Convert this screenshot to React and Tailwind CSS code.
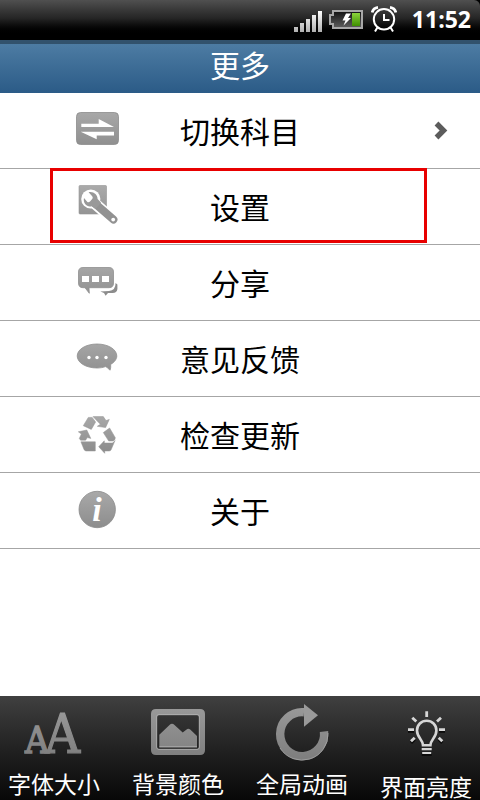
import { useState } from 'react'

const rows = [
  { id: 'subject', label: '切换科目', Icon: SwitchIcon, hasMore: true },
  { id: 'settings', label: '设置', Icon: WrenchIcon },
  { id: 'share', label: '分享', Icon: ShareIcon },
  { id: 'feedback', label: '意见反馈', Icon: FeedbackIcon },
  { id: 'update', label: '检查更新', Icon: RecycleIcon },
  { id: 'about', label: '关于', Icon: InfoIcon },
]

const tools = [
  { id: 'font', label: '字体大小', Icon: FontSizeIcon },
  { id: 'background', label: '背景颜色', Icon: PictureIcon },
  { id: 'animation', label: '全局动画', Icon: RotateIcon },
  { id: 'brightness', label: '界面亮度', Icon: BulbIcon },
]

/* Gradients shared by all icons */
function Gradients() {
  return (
    <svg className="absolute w-0 h-0" aria-hidden="true">
      <defs>
        <linearGradient id="grey" gradientUnits="userSpaceOnUse" x1="0" y1="2" x2="0" y2="40">
          <stop offset="0" stopColor="#a9a9a9" />
          <stop offset="1" stopColor="#8c8c8c" />
        </linearGradient>
        <linearGradient id="tool" gradientUnits="userSpaceOnUse" x1="0" y1="4" x2="0" y2="56">
          <stop offset="0" stopColor="#9a9a9a" />
          <stop offset="1" stopColor="#7e7e7e" />
        </linearGradient>
        <linearGradient id="bars" gradientUnits="userSpaceOnUse" x1="0" y1="5" x2="0" y2="26">
          <stop offset="0" stopColor="#ffffff" />
          <stop offset="1" stopColor="#b0b0b0" />
        </linearGradient>
        <linearGradient id="cell" x1="0" y1="0" x2="0" y2="1">
          <stop offset="0" stopColor="#111111" />
          <stop offset="1" stopColor="#606060" />
        </linearGradient>
        <linearGradient id="charge" x1="0" y1="0" x2="0" y2="1">
          <stop offset="0" stopColor="#8bd43c" />
          <stop offset="1" stopColor="#3f8f00" />
        </linearGradient>
      </defs>
    </svg>
  )
}

function RowSvg({ children }) {
  return (
    <svg viewBox="0 0 44 43" className="w-[44px] h-[43px]" fill="url(#grey)" aria-hidden="true">
      {children}
    </svg>
  )
}

function SwitchIcon() {
  return (
    <RowSvg>
      <rect x="1.5" y="3.5" width="42" height="32" rx="4" stroke="#8c8c8c" strokeWidth="0.8" />
      <path fill="#fff" d="M6.3 14.7H23.7V10L39 18H6.3ZM39 22.7V26.5H21.7V30.3L5.7 22.7Z" />
    </RowSvg>
  )
}

function WrenchIcon() {
  return (
    <RowSvg>
      <rect x="4" y="0.5" width="27.5" height="28.5" rx="1" stroke="#949494" strokeWidth="0.6" />
      <circle cx="15.8" cy="14" r="9.6" fill="#fff" />
      <path d="M17 16L38.6 35" stroke="#fff" strokeWidth="11.5" strokeLinecap="round" />
      <path d="M20 18.5L38.4 34.6" stroke="#929292" strokeWidth="8" strokeLinecap="round" />
      <path
        d="M13.6 7.2C18 6 22.6 9.2 22.6 14L26 17.6L20.6 24L16.6 21.2C12 22.4 7.8 18.2 9 13L12.4 17Q13.6 17.6 15 16.6L17.4 13.8Q18.2 12.4 17.2 11.2Z"
        fill="#999999"
      />
      <circle cx="38.2" cy="34.6" r="1.9" fill="#fff" />
    </RowSvg>
  )
}

function ShareIcon() {
  return (
    <RowSvg>
      <path
        d="M8 6.5H34Q38.5 6.5 38.5 11V22Q38.5 26.7 34 26.7H14L14.3 32.3L10 26.7H8Q3.5 26.7 3.5 22V11Q3.5 6.5 8 6.5Z"
        stroke="#8f8f8f"
        strokeWidth="0.8"
      />
      <path fill="#fff" d="M7 15H14V21H7ZM17 15H24V21H17ZM27 15H34V21H27Z" />
      <path fill="#8c8c8c" d="M40.6 22L42.4 23.6V28Q42 31.8 37.6 32H33L30.6 34.8L29 32L25.3 30.6L34 30Q40.6 29.6 40.6 22Z" />
    </RowSvg>
  )
}

function FeedbackIcon() {
  return (
    <RowSvg>
      <path
        d="M22 7C33 7 41.8 12.3 41.8 19C41.8 22.4 39 25.6 35.6 27.4C35.8 29.6 35.8 31.4 35 33.2C33.8 32 32.6 30.6 30.4 29.6C27.8 30.6 25 31 22 31C11 31 2.2 25.7 2.2 19C2.2 12.3 11 7 22 7Z"
        stroke="#8f8f8f"
        strokeWidth="0.8"
      />
      <g fill="#fff">
        <circle cx="14" cy="20.5" r="1.7" />
        <circle cx="22" cy="20.5" r="1.7" />
        <circle cx="31" cy="20.5" r="1.7" />
      </g>
    </RowSvg>
  )
}

function RecycleIcon() {
  return (
    <RowSvg>
      <g stroke="#949494" strokeWidth="0.5">
        <path d="M8.3 12.7L13.3 4.4H17.2L20.6 9L16.3 16.4Z" />
        <path d="M18 3.6H28.3L31 7.6L34.3 6.4L30.6 14.6L22.3 13.3L25.4 11.2L22.6 8.4Z" />
        <path d="M28.3 19.6L34.6 15L40.3 24.7Q40.3 27.6 37.4 28H33.7Z" />
        <path d="M23.7 33.7L29.3 27.8V30H37.6L40 27.6L36 37Q35.4 38 34 38H29.7V40.3Z" />
        <path d="M5.9 28.8H20.3V38H11.3Q9.8 38 9 36.4Z" />
        <path d="M3.3 18.8L11.8 17L15.8 25.4L12.4 24.6L10.6 27.2H5.6L4.3 25.4L6.4 21Z" />
      </g>
    </RowSvg>
  )
}

function InfoIcon() {
  return (
    <RowSvg>
      <circle cx="22.2" cy="20.5" r="18.2" stroke="#8a8a8a" strokeWidth="0.8" />
      <text
        x="22"
        y="32"
        fill="#fff"
        textAnchor="middle"
        className="font-['Liberation_Serif',serif] font-bold italic text-[34px]"
      >
        i
      </text>
    </RowSvg>
  )
}

function FontSizeIcon() {
  return (
    <svg viewBox="0 0 60 60" className="w-[60px] h-[60px]" fill="url(#tool)" stroke="url(#tool)" aria-hidden="true">
      <g className="font-['DejaVu_Serif_Condensed','DejaVu_Serif',serif]">
        <text x="1" y="51" strokeWidth="1.4" className="text-[37px]">A</text>
        <text x="21" y="51" strokeWidth="1.2" className="text-[54px]">A</text>
      </g>
    </svg>
  )
}

function PictureIcon() {
  return (
    <svg viewBox="0 0 60 60" className="w-[60px] h-[60px]" fill="url(#tool)" aria-hidden="true">
      <path
        fillRule="evenodd"
        d="M8 7H52Q57 7 57 12V48Q57 53 52 53H8Q3 53 3 48V12Q3 7 8 7ZM11 12.7Q8.7 12.7 8.7 15V45Q8.7 47.3 11 47.3H49Q51.3 47.3 51.3 45V15Q51.3 12.7 49 12.7Z"
      />
      <rect x="8.7" y="12.7" width="42.6" height="34.6" rx="2.3" fill="none" stroke="#c4c4c4" strokeWidth="0.8" />
      <path d="M11.3 44.7V32.7L21.5 23Q24 20.6 26.5 23L34.7 30.4L38.6 27.4Q40.4 26 42.2 27.6L49 34V44.7Z" />
      <path d="M11.3 44.9H49" stroke="#c4c4c4" />
    </svg>
  )
}

function RotateIcon() {
  return (
    <svg viewBox="0 0 60 60" className="w-[60px] h-[60px]" aria-hidden="true">
      <path d="M52 29.5A22 22 0 1 1 32 10.2" fill="none" stroke="url(#tool)" strokeWidth="8.4" />
      <path d="M32 2L46 13.3L32 24.7Z" fill="#9a9a9a" />
      <path d="M56 31A26 26 0 0 1 8 46" fill="none" stroke="#a6a6a6" strokeWidth="0.8" />
    </svg>
  )
}

function BulbIcon() {
  return (
    <svg viewBox="0 0 60 63" className="w-[60px] h-[63px]" fill="none" aria-hidden="true">
      <g stroke="#0a0a0a" strokeWidth="3" transform="translate(0 1.6)">
        <path d="M12 27.7H18M43 27.7H49M15 39.3L18.7 35.7M46.3 39.3L42.7 35.7M25.7 51H35.7" />
      </g>
      <g stroke="#d6d6d6" strokeWidth="2.8">
        <path d="M30.7 9.3V15M12 27.7H18M43 27.7H49M16.3 15.8L20.3 19.6M45 15.8L41 19.6M15 39.3L18.7 35.7M46.3 39.3L42.7 35.7" />
        <path d="M27 43.2C27 38 21 35.6 21 28.4A9.7 9.7 0 0 1 40.4 28.4C40.4 35.6 34.4 38 34.4 43.2Z" strokeWidth="2.6" />
        <path d="M25.7 47.2H35.7M26.2 51H35.2" strokeWidth="2.2" />
      </g>
    </svg>
  )
}

function StatusBar() {
  return (
    <div className="bg-black">
      <div className="flex h-10 items-center justify-end rounded-tr-md bg-linear-to-b from-[#505050] from-0% via-[#262626] via-45% to-black to-90% pb-0.5 pr-[9px] text-white">
        <svg viewBox="0 0 28 26" className="w-7 h-[26px]" fill="url(#bars)" aria-hidden="true">
          <path d="M0 21H4V26H0ZM6 17H10V26H6ZM12 13H16V26H12ZM18 9H22V26H18ZM24 5H28V26H24Z" />
        </svg>
        <svg viewBox="0 0 34 26" className="ml-[7px] w-[34px] h-[26px]" aria-hidden="true">
          <path d="M4 5H33V22H4V18H1V9H4Z" fill="url(#cell)" stroke="#a8a8a8" strokeWidth="2" />
          <rect x="23" y="7" width="8" height="13" fill="url(#charge)" />
          <path d="M17 7.5H22L19 12H22L14.5 19.5L16.5 14.5H13.5Z" fill="#fff" />
        </svg>
        <svg viewBox="0 0 26 26" className="ml-2 w-[26px] h-[26px]" fill="none" stroke="#fff" aria-hidden="true">
          <circle cx="13" cy="13.3" r="10.2" strokeWidth="2" />
          <path d="M13 8V14H18.5" strokeWidth="2" />
          <path d="M6.4 21.5L4 25.5M19.6 21.5L22 25.5" strokeWidth="2" />
          <path d="M1.2 6.5Q2 2.2 7 1.4M24.8 6.5Q24 2.2 19 1.4" strokeWidth="2.8" />
        </svg>
        <time className="ml-[15px] font-['Open_Sans','Noto_Sans',sans-serif] text-[23px] leading-8 font-bold">11:52</time>
      </div>
    </div>
  )
}

function MenuRow({ label, Icon, hasMore, selected, onSelect }) {
  return (
    <li className="relative border-b border-[#a6a6a6]">
      <button
        type="button"
        onClick={onSelect}
        className="grid h-[75px] w-full grid-cols-[1fr_auto_1fr] items-center text-black"
      >
        <span className="pl-[75px]">
          <Icon />
        </span>
        <span className="pb-0.5 text-[30px] leading-10">{label}</span>
        {hasMore && (
          <svg viewBox="0 0 14 20" className="mr-8 w-[14px] h-5 justify-self-end" fill="none" aria-hidden="true">
            <path d="M2.5 2.5L9.5 9.5L2.5 16.5" stroke="#5c5c5c" strokeWidth="5.4" />
          </svg>
        )}
      </button>
      {selected && (
        <span className="pointer-events-none absolute -top-px bottom-px left-[50px] right-[53px] border-3 border-[#e80000]" />
      )}
    </li>
  )
}

export default function App() {
  const [selected, setSelected] = useState('settings')

  return (
    <div className="flex min-h-screen flex-col bg-white font-['Noto_Sans_CJK_SC',sans-serif]">
      <Gradients />
      <StatusBar />

      <header className="border-t-4 border-[#32526c] bg-linear-to-b from-[#4d7ca3] to-[#2b5b87]">
        <h1 className="pb-2 text-center text-[30px] leading-[41px] text-white">更多</h1>
      </header>

      <main className="flex-1">
        <ul>
          {rows.map((row) => (
            <MenuRow
              key={row.id}
              label={row.label}
              Icon={row.Icon}
              hasMore={row.hasMore}
              selected={selected === row.id}
              onSelect={() => setSelected(row.id)}
            />
          ))}
        </ul>
      </main>

      {/* Quick reading options */}
      <nav className="flex items-start justify-between bg-linear-to-b from-[#404040] to-[#080808] px-2 pt-1.5">
        {tools.map(({ id, label, Icon }) => (
          <button key={id} type="button" className="flex flex-col items-center text-white">
            <Icon />
            <span className="mt-[7px] text-[23px] leading-7">{label}</span>
          </button>
        ))}
      </nav>
    </div>
  )
}
